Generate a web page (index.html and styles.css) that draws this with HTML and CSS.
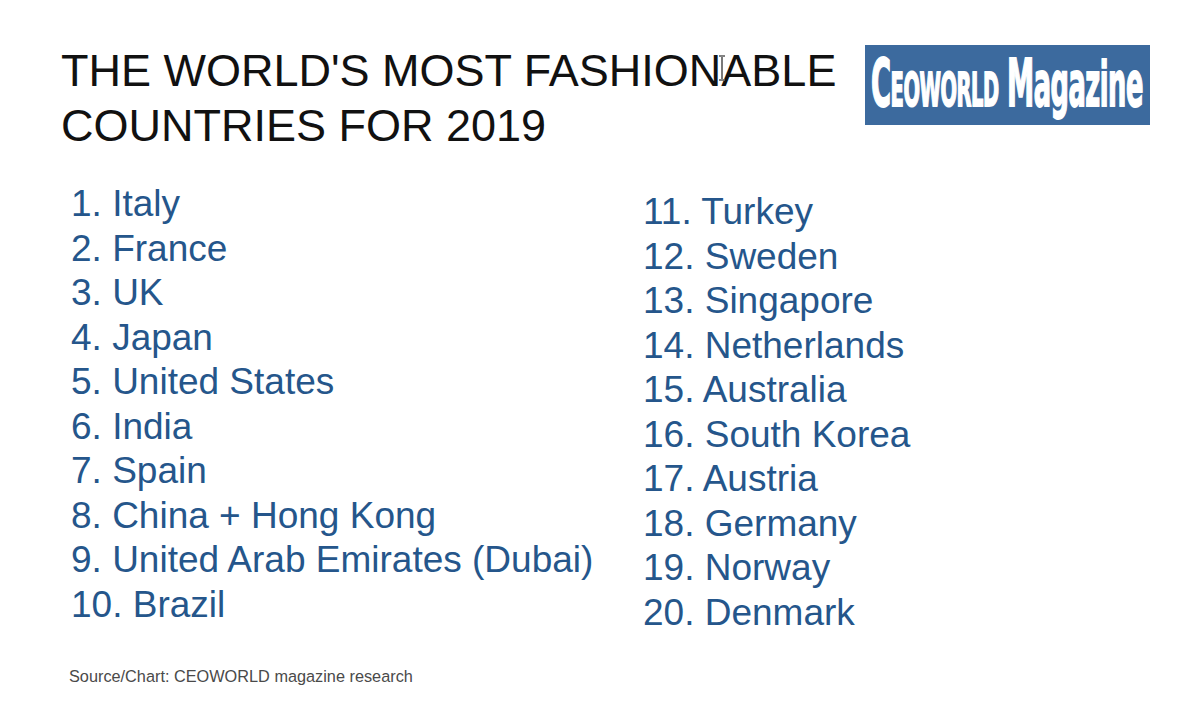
FILE: index.html
```html
<!DOCTYPE html>
<html lang="en">
<head>
<meta charset="utf-8">
<title>The World's Most Fashionable Countries for 2019</title>
<link rel="stylesheet" href="styles.css">
</head>
<body>
<div class="slide">
  <header class="header">
    <h1 class="title">THE WORLD'S MOST FASHIONABLE<br>COUNTRIES FOR 2019</h1>
    <div class="logo">
      <span class="logo-text"><span class="big">C</span><span class="small">EOWORLD</span><span class="gap"></span><span class="big">M</span><span class="lower">agazine</span></span>
    </div>
    <svg class="cursor" width="8" height="26" viewBox="0 0 8 26" aria-hidden="true">
      <path d="M1 1h6M1 25h6M4 1v24" stroke="#222" stroke-width="1.6" fill="none"/>
      <path d="M1 1h6M1 25h6M4 1v24" stroke="#fff" stroke-width="0.5" fill="none"/>
    </svg>
  </header>
  <main class="lists">
    <ul class="col col-left">
      <li>1. Italy</li>
      <li>2. France</li>
      <li>3. UK</li>
      <li>4. Japan</li>
      <li>5. United States</li>
      <li>6. India</li>
      <li>7. Spain</li>
      <li>8. China + Hong Kong</li>
      <li>9. United Arab Emirates (Dubai)</li>
      <li>10. Brazil</li>
    </ul>
    <ul class="col col-right">
      <li>11. Turkey</li>
      <li>12. Sweden</li>
      <li>13. Singapore</li>
      <li>14. Netherlands</li>
      <li>15. Australia</li>
      <li>16. South Korea</li>
      <li>17. Austria</li>
      <li>18. Germany</li>
      <li>19. Norway</li>
      <li>20. Denmark</li>
    </ul>
  </main>
  <p class="source">Source/Chart: CEOWORLD magazine research</p>
</div>
</body>
</html>
```
FILE: styles.css
```css
html, body {
  margin: 0;
  padding: 0;
  background: #ffffff;
}
.slide {
  width: 1200px;
  height: 722px;
  overflow: hidden;
  font-family: "Liberation Sans", Arial, sans-serif;
}
.header {
  position: relative;
  display: flex;
  align-items: flex-start;
  padding: 43px 50px 0 61px;
}
.title {
  margin: 0;
  font-weight: normal;
  font-size: 45px;
  line-height: 55px;
  color: #111111;
  white-space: nowrap;
}
.logo {
  margin-left: auto;
  margin-top: 2px;
  width: 285px;
  height: 80px;
  background: #3c6a9e;
  overflow: hidden;
  position: relative;
}
.logo-text {
  position: absolute;
  left: 6px;
  top: -1px;
  display: inline-block;
  white-space: nowrap;
  font-family: "DejaVu Sans Condensed", "DejaVu Sans", sans-serif;
  font-stretch: condensed;
  font-weight: bold;
  color: #ffffff;
  -webkit-text-stroke: 1.8px #ffffff;
  line-height: 80px;
  transform: scaleX(0.46);
  transform-origin: left center;
  letter-spacing: -1px;
}
.logo-text .big {
  font-size: 66px;
}
.logo-text .small {
  font-size: 47px;
}
.logo-text .lower {
  font-size: 62px;
}
.logo-text .gap {
  display: inline-block;
  width: 18px;
}
.cursor {
  position: absolute;
  left: 718px;
  top: 55px;
}
.lists {
  display: flex;
  margin-top: 29px;
  padding-left: 71px;
}
.col {
  list-style: none;
  margin: 0;
  padding: 0;
  font-size: 37px;
  line-height: 44.5px;
  color: #25568b;
  white-space: nowrap;
}
.col-left {
  width: 572px;
}
.col-right {
  padding-top: 8px;
}
.source {
  margin: 32px 0 0 69px;
  font-size: 16.3px;
  line-height: 18px;
  color: #4a4a4a;
}
```
